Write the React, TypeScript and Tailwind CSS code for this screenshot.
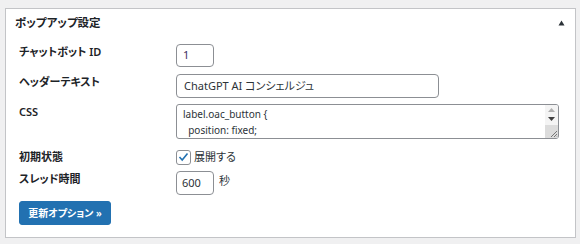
import React from "react";

const font = "[font-family:'Noto_Sans','Noto_Sans_CJK_JP',sans-serif] [font-feature-settings:'palt']";

function Label({ children }: { children: React.ReactNode }) {
  return (
    <div className="w-[170px] shrink-0 pl-[13px] text-[11px] leading-[16px] font-semibold text-[#1d2327]">
      {children}
    </div>
  );
}

export default function App() {
  return (
    <div className={`w-[580px] h-[244px] bg-[#f0f0f1] pt-[8px] ${font}`}>
      <div className="ml-[5px] w-[571px] h-[230px] border border-[#c3c4c7] bg-white">
        <div className="h-[27px] flex items-center justify-between pl-[9px] pr-[9px]">
          <div className="text-[11.5px] font-semibold text-[#1d2327] leading-[16px]">ポップアップ設定</div>
          <svg width="7" height="6" viewBox="0 0 7 6" className="mr-[1px]">
            <path d="M3.5 0.5 L6.5 5.5 L0.5 5.5 Z" fill="#2c3338" />
          </svg>
        </div>

        <div className="flex mt-[8px]">
          <Label>チャットボット ID</Label>
          <div className="w-[38px] h-[23px] border border-[#8c8f94] rounded-[4px] pl-[6px] flex items-center text-[11px] text-[#3c2f5f]">
            1
          </div>
        </div>

        <div className="flex mt-[7px]">
          <Label>ヘッダーテキスト</Label>
          <div className="w-[263px] h-[24px] border border-[#8c8f94] rounded-[4px] pl-[7px] flex items-center text-[11px] text-[#2c3338]">
            ChatGPT AI コンシェルジュ
          </div>
        </div>

        <div className="flex mt-[6px]">
          <Label>CSS</Label>
          <div className="w-[383px] h-[35px] border border-[#8c8f94] rounded-[3px] flex overflow-hidden">
            <div className="flex-1 pl-[6px] pt-[1px] text-[10px] leading-[16px] text-[#2c3338] whitespace-pre">
              {"label.oac_button {\n  position: fixed;"}
            </div>
            <div className="w-[13px] flex flex-col bg-[#f4f4f4]">
              <div className="h-[9px] flex items-center justify-center">
                <svg width="7" height="4" viewBox="0 0 7 4">
                  <path d="M3.5 0 L7 4 L0 4 Z" fill="#b0b0b0" />
                </svg>
              </div>
              <div className="h-[9px] flex items-center justify-center">
                <svg width="7" height="4" viewBox="0 0 7 4">
                  <path d="M0 0 L7 0 L3.5 4 Z" fill="#404040" />
                </svg>
              </div>
              <div className="flex-1" />
              <div className="h-[13px] bg-[#dcdcdc] flex items-end justify-end">
                <svg width="9" height="9" viewBox="0 0 9 9">
                  <path d="M8 2 L2 8 M8 5 L5 8 M8 7.5 L7.5 8" stroke="#777" strokeWidth="1" />
                </svg>
              </div>
            </div>
          </div>
        </div>

        <div className="flex mt-[10px] items-start">
          <Label>初期状態</Label>
          <div className="flex items-center h-[16px]">
            <div className="w-[15px] h-[15px] border border-[#8c8f94] rounded-[3px] flex items-center justify-center">
              <svg width="11" height="10" viewBox="0 0 11 10">
                <path d="M1.5 5 L4.2 8 L9.5 1.5" stroke="#2271b1" strokeWidth="1.6" fill="none" />
              </svg>
            </div>
            <span className="ml-[3px] text-[11px] text-[#2c3338]">展開する</span>
          </div>
        </div>

        <div className="flex mt-[6px]">
          <Label>スレッド時間</Label>
          <div className="w-[38px] h-[24px] border border-[#8c8f94] rounded-[4px] pl-[5px] flex items-center text-[11px] text-[#2c3338]">
            600
          </div>
          <span className="ml-[5px] text-[11px] leading-[20px] text-[#2c3338]">秒</span>
        </div>

        <div className="mt-[6px] ml-[13px] w-[92px] h-[24px] bg-[#2271b1] border border-[#2271b1] rounded-[3px] flex items-center justify-center text-white text-[10px] font-semibold">
          更新オプション »
        </div>
      </div>
    </div>
  );
}
